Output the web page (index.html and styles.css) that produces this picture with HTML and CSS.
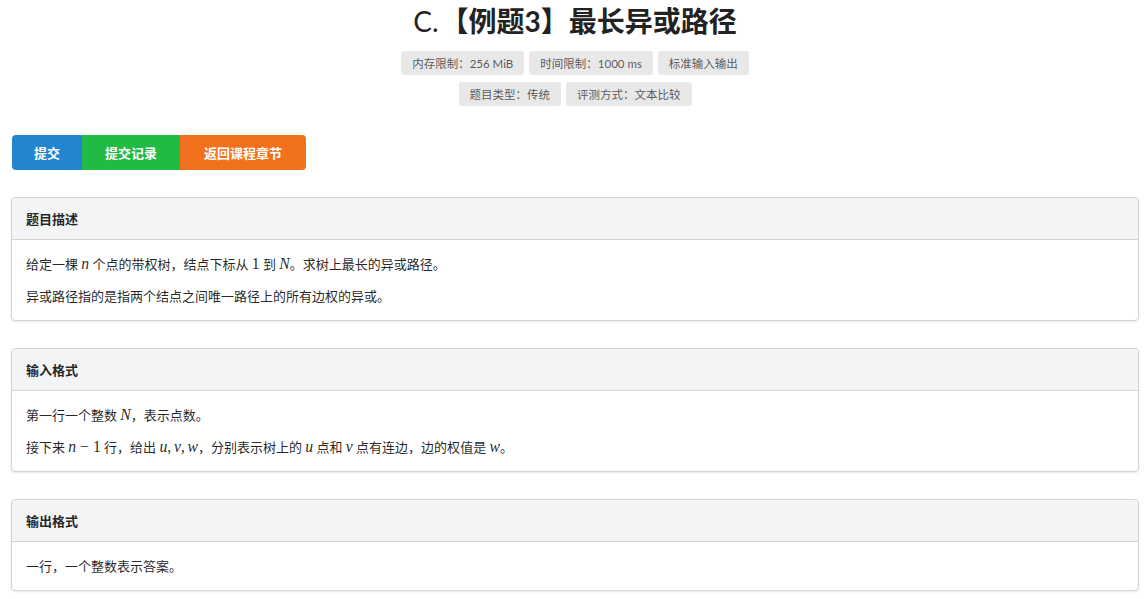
FILE: index.html
```html
<!DOCTYPE html>
<html lang="zh">
<head>
<meta charset="utf-8">
<title>C.【例题3】最长异或路径</title>
<link rel="stylesheet" href="styles.css">
</head>
<body>
<div class="page">
  <header class="head">
    <h1 class="title"><span class="num">C.</span>【例题3】最长异或路径</h1>
    <div class="tags">
      <span class="tag">内存限制：256 MiB</span>
      <span class="tag">时间限制：1000 ms</span>
      <span class="tag">标准输入输出</span>
    </div>
    <div class="tags">
      <span class="tag">题目类型：传统</span>
      <span class="tag">评测方式：文本比较</span>
    </div>
  </header>

  <div class="buttons">
    <a class="btn blue">提交</a>
    <a class="btn green">提交记录</a>
    <a class="btn orange">返回课程章节</a>
  </div>

  <section class="card">
    <div class="card-head">题目描述</div>
    <div class="card-body">
      <p>给定一棵 <i class="m">n</i> 个点的带权树，结点下标从 <span class="mn">1</span> 到 <i class="m">N</i>。求树上最长的异或路径。</p>
      <p>异或路径指的是指两个结点之间唯一路径上的所有边权的异或。</p>
    </div>
  </section>

  <section class="card">
    <div class="card-head">输入格式</div>
    <div class="card-body">
      <p>第一行一个整数 <i class="m">N</i>，表示点数。</p>
      <p>接下来 <i class="m">n</i><span class="mn op">−</span><span class="mn">1</span> 行，给出 <i class="m">u</i><span class="mn comma">,</span><i class="m">v</i><span class="mn comma">,</span><i class="m">w</i>，分别表示树上的 <i class="m">u</i> 点和 <i class="m">v</i> 点有连边，边的权值是 <i class="m">w</i>。</p>
    </div>
  </section>

  <section class="card">
    <div class="card-head">输出格式</div>
    <div class="card-body">
      <p>一行，一个整数表示答案。</p>
    </div>
  </section>
</div>
</body>
</html>
```

FILE: styles.css
```css
html, body {
  margin: 0;
  padding: 0;
  background: #ffffff;
}
body {
  font-family: Lato, "Noto Sans CJK SC", sans-serif;
  color: rgba(0, 0, 0, 0.87);
  font-size: 13px;
}
.page {
  padding: 0 7px 0 11px;
}
.head {
  display: flex;
  flex-direction: column;
  align-items: center;
}
.title {
  margin: 2px 0 11px;
  font-size: 28px;
  line-height: 38px;
  font-weight: 700;
  color: #222;
}
.title .num {
  font-weight: 400;
  margin-right: 2px;
}
.tags {
  display: flex;
  gap: 5px;
  margin-bottom: 7px;
}
.tag {
  display: inline-flex;
  align-items: center;
  height: 24px;
  padding: 0 11px;
  background: #e8e8e8;
  border-radius: 3px;
  color: rgba(0, 0, 0, 0.65);
  font-size: 11.5px;
  font-weight: 400;
}
.buttons {
  display: flex;
  margin: 22px 0 27px 1px;
}
.btn {
  display: inline-flex;
  align-items: center;
  height: 35px;
  color: #fff;
  font-weight: 700;
  font-size: 13px;
}
.blue { background: #2185d0; border-radius: 4px 0 0 4px; padding: 0 22px; }
.green { background: #21ba45; padding: 0 23px; }
.orange { background: #f2711c; border-radius: 0 4px 4px 0; padding: 0 24px; }
.card {
  border: 1px solid #d4d4d5;
  border-radius: 4px;
  margin-bottom: 27px;
  box-shadow: 0 1px 2px rgba(34, 36, 38, 0.1);
}
.card-head {
  height: 41px;
  display: flex;
  align-items: center;
  padding: 0 14px;
  background: #f3f4f5;
  border-bottom: 1px solid #d4d4d5;
  font-weight: 700;
  font-size: 13px;
  border-radius: 4px 4px 0 0;
}
.card-body {
  padding: 15px 14px 1px;
}
.card-body p {
  margin: 0 0 13px;
  line-height: 19px;
}
.m {
  font-family: "Liberation Serif", "DejaVu Serif", serif;
  font-style: italic;
  font-size: 1.21em;
  line-height: 1;
}
.mn {
  font-family: "Liberation Serif", "DejaVu Serif", serif;
  font-size: 1.21em;
  line-height: 1;
}
.op {
  margin: 0 0.25em;
}
.comma {
  margin-right: 0.17em;
}
```
